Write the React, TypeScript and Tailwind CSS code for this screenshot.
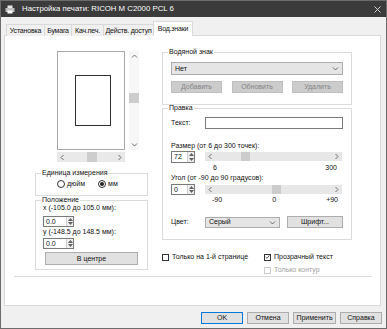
import type { ReactNode } from "react";

type Dir = "up" | "down" | "left" | "right";

function Chevron({ dir, color = "#606060" }: { dir: Dir; color?: string }) {
  const d = {
    up: "M1 4.5 L3.5 2 L6 4.5",
    down: "M1 2.5 L3.5 5 L6 2.5",
    left: "M4.5 1 L2 3.5 L4.5 6",
    right: "M2.5 1 L5 3.5 L2.5 6",
  }[dir];
  return (
    <svg width="7" height="7" viewBox="0 0 7 7" className="shrink-0">
      <path d={d} fill="none" stroke={color} strokeWidth="0.9" />
    </svg>
  );
}

function Group({ title, className, children }: { title: string; className: string; children: ReactNode }) {
  return (
    <fieldset className={"border border-[#dcdcdc] " + className}>
      <legend className="ml-[5px] px-[1px] leading-[8px]">{title}</legend>
      {children}
    </fieldset>
  );
}

function Spin({ value, w }: { value: string; w: string }) {
  return (
    <div className={"flex h-[11px] border border-[#7a7a7a] bg-white " + w}>
      <div className="flex-1 pl-[2px] leading-[9px]">{value}</div>
      <div className="flex w-[7px] flex-col border-l border-[#d0d0d0] bg-[#efefef]">
        <div className="flex flex-1 items-center justify-center">
          <svg width="5" height="3" viewBox="0 0 5 3"><path d="M0 3 L2.5 0 L5 3 Z" fill="#606060" /></svg>
        </div>
        <div className="flex flex-1 items-center justify-center">
          <svg width="5" height="3" viewBox="0 0 5 3"><path d="M0 0 L2.5 3 L5 0 Z" fill="#606060" /></svg>
        </div>
      </div>
    </div>
  );
}

function Slider({ thumb }: { thumb: string }) {
  return (
    <div className="mt-[1px] flex h-[9px] w-[137px] items-center bg-[#e7e7e7] px-[2px]">
      <Chevron dir="left" />
      <div className="flex h-full flex-1">
        <div className={"h-full w-[9px] bg-[#cccccc] " + thumb} />
      </div>
      <Chevron dir="right" />
    </div>
  );
}

function Btn({ label, w, disabled, primary }: { label: string; w: string; disabled?: boolean; primary?: boolean }) {
  return (
    <div
      className={
        "flex h-[12px] items-center justify-center border leading-[8px] " +
        w +
        (primary ? " border-[#0078d7] bg-[#e1e1e1]" : disabled ? " border-[#bfbfbf] bg-[#cccccc] text-[#838383]" : " border-[#adadad] bg-[#e1e1e1]")
      }
    >
      {label}
    </div>
  );
}

function Select({ value, w }: { value: string; w: string }) {
  return (
    <div className={"flex items-center justify-between border border-[#adadad] bg-[#e5e5e5] pl-[3px] pr-[3px] leading-[8px] " + w}>
      <span>{value}</span>
      <Chevron dir="down" />
    </div>
  );
}

function Check({ checked, disabled }: { checked?: boolean; disabled?: boolean }) {
  return (
    <div className={"flex h-[7px] w-[7px] shrink-0 items-center justify-center border bg-white " + (disabled ? "border-[#cccccc]" : "border-[#333333]")}>
      {checked && (
        <svg width="6" height="6" viewBox="0 0 6 6"><path d="M0.8 3 L2.4 4.6 L5.3 1" fill="none" stroke="#222" strokeWidth="0.9" /></svg>
      )}
    </div>
  );
}

function Radio({ checked }: { checked?: boolean }) {
  return (
    <div className="flex h-[8px] w-[8px] items-center justify-center rounded-full border border-[#333333] bg-white">
      {checked && <div className="h-[4px] w-[4px] rounded-full bg-[#222]" />}
    </div>
  );
}

const tabs = [
  { label: "Установка", w: "w-[39px]" },
  { label: "Бумага", w: "w-[28px]" },
  { label: "Кач.печ.", w: "w-[33px]" },
  { label: "Действ. доступ", w: "w-[51px]" },
];

export default function App() {
  return (
    <div className="flex h-[329px] w-[387px] flex-col border border-[#6c6c6c] bg-[#f0f0f0] font-['Liberation_Sans',Arial,sans-serif] text-[7px] leading-[8px] text-[#111]">
      {/* title bar */}
      <div className="flex h-[16px] shrink-0 items-center bg-[#3b3b3b] text-[7.8px] text-white">
        <svg width="10" height="9" viewBox="0 0 10 9" className="ml-[4px]">
          <rect x="2.5" y="0.5" width="5" height="2.5" fill="#e8e8e8" />
          <rect x="0.5" y="3" width="9" height="4" fill="#bdbdbd" />
          <rect x="2.5" y="5.5" width="5" height="3" fill="#ffffff" />
        </svg>
        <span className="ml-[7px]">Настройка печати: RICOH M C2000 PCL 6</span>
        <svg width="7" height="7" viewBox="0 0 7 7" className="ml-auto mr-[5px]">
          <path d="M0.5 0.5 L6.5 6.5 M6.5 0.5 L0.5 6.5" stroke="#e0e0e0" strokeWidth="0.9" />
        </svg>
      </div>

      {/* tabs */}
      <div className="relative z-10 ml-[5px] mt-[4px] -mb-px flex h-[15px] items-end tracking-[-0.2px]">
        {tabs.map((t) => (
          <div key={t.label} className={"-mr-px flex h-[12px] items-center justify-center whitespace-nowrap border border-b-0 border-[#d9d9d9] bg-[#f0f0f0] " + t.w}>
            {t.label}
          </div>
        ))}
        <div className="flex h-[15px] w-[40px] items-center justify-center border border-b-0 border-[#d9d9d9] bg-white pb-[1px]">
          Вод.знаки
        </div>
      </div>

      {/* panel */}
      <div className="ml-[3px] flex h-[271px] w-[377px] shrink-0 flex-col border border-[#d9d9d9] bg-white">
        <div className="flex h-[240px]">
          {/* left column */}
          <div className="ml-[30px] flex w-[113px] flex-col">
            <div className="ml-[22px] mt-[15px] flex">
              <div className="h-[99px] w-[68px] border border-[#a8a8a8] bg-white pl-[17px] pt-[23px]">
                <div className="h-[51px] w-[36px] border border-[#303030]" />
              </div>
              <div className="ml-[4px] flex h-[99px] w-[10px] flex-col items-center bg-[#f7f7f7]">
                <div className="mt-[2px]"><Chevron dir="up" /></div>
                <div className="mt-[33px] h-[10px] w-full bg-[#cdcdcd]" />
                <div className="flex-1" />
                <div className="mb-[2px]"><Chevron dir="down" /></div>
              </div>
            </div>
            <div className="ml-[22px] mt-[2px] flex h-[10px] w-[68px] items-center bg-[#e9e9e9] px-[2px]">
              <Chevron dir="left" />
              <div className="ml-[21px] h-full w-[10px] bg-[#cdcdcd]" />
              <div className="flex-1" />
              <Chevron dir="right" />
            </div>

            <Group title="Единица измерения" className="mt-[7px] h-[27px]">
              <div className="mt-[3px] flex items-center pl-[21px]">
                <Radio />
                <span className="ml-[2px]">дюйм</span>
                <div className="ml-[13px]"><Radio checked /></div>
                <span className="ml-[2px]">мм</span>
              </div>
            </Group>

            <Group title="Положение" className="h-[74px]">
              <div className="flex flex-col pl-[7px]">
                <div>x (-105.0 до 105.0 мм):</div>
                <div className="mt-[4px]"><Spin value="0.0" w="w-[31px]" /></div>
                <div className="mt-[1px]">y (-148.5 до 148.5 мм):</div>
                <div className="mt-[2px]"><Spin value="0.0" w="w-[31px]" /></div>
                <div className="ml-[2px] mt-[3px]"><Btn label="В центре" w="w-[93px] h-[13px]" /></div>
              </div>
            </Group>
          </div>

          {/* right column */}
          <div className="ml-[14px] flex w-[190px] flex-col">
            <Group title="Водяной знак" className="mt-[12px] h-[57px]">
              <div className="flex flex-col px-[8px]">
                <Select value="Нет" w="mt-[6px] h-[13px]" />
                <div className="mt-[6px] flex justify-between">
                  <Btn label="Добавить" w="w-[51px]" disabled />
                  <Btn label="Обновить" w="w-[51px]" disabled />
                  <Btn label="Удалить" w="w-[51px]" disabled />
                </div>
              </div>
            </Group>

            <Group title="Правка" className="-mt-px h-[136px]">
              <div className="flex flex-col px-[8px]">
                <div className="mt-[5px] flex items-center">
                  <span className="w-[34px]">Текст:</span>
                  <div className="h-[12px] w-[138px] border border-[#7a7a7a] bg-white" />
                </div>
                <div className="mt-[13px]">Размер (от 6 до 300 точек):</div>
                <div className="mt-[1px] flex items-start">
                  <Spin value="72" w="w-[24px] h-[12px]" />
                  <div className="ml-[10px]"><Slider thumb="ml-[27px]" /></div>
                </div>
                <div className="mt-[1px] flex w-[172px] justify-between pl-[42px] pr-[6px]">
                  <span>6</span>
                  <span>300</span>
                </div>
                <div className="mt-[2px]">Угол (от -90 до 90 градусов):</div>
                <div className="mt-[2px] flex items-start">
                  <Spin value="0" w="w-[24px]" />
                  <div className="ml-[10px]"><Slider thumb="ml-[58px]" /></div>
                </div>
                <div className="mt-[1px] flex w-[172px] justify-between pl-[41px] pr-[5px]">
                  <span>-90</span>
                  <span>0</span>
                  <span>+90</span>
                </div>
                <div className="mt-[12px] flex items-center">
                  <span className="w-[34px]">Цвет:</span>
                  <Select value="Серый" w="h-[11px] w-[75px]" />
                  <div className="ml-[7px]"><Btn label="Шрифт..." w="w-[56px] h-[12px]" /></div>
                </div>
              </div>
            </Group>

            <div className="mt-[13px] grid grid-cols-[102px_1fr] gap-y-[5px]">
              <div className="flex items-center">
                <Check />
                <span className="ml-[3px]">Только на 1-й странице</span>
              </div>
              <div className="flex items-center">
                <Check checked />
                <span className="ml-[3px]">Прозрачный текст</span>
              </div>
              <div />
              <div className="flex items-center text-[#a0a0a0]">
                <Check disabled />
                <span className="ml-[3px]">Только контур</span>
              </div>
            </div>
          </div>
        </div>
        <div className="ml-[9px] h-px w-[358px] bg-[#dcdcdc]" />
      </div>

      {/* bottom buttons */}
      <div className="mr-[4px] mt-[6px] flex justify-end gap-[4px]">
        <Btn label="OK" w="w-[42px]" primary />
        <Btn label="Отмена" w="w-[42px]" />
        <Btn label="Применить" w="w-[43px]" />
        <Btn label="Справка" w="w-[42px]" />
      </div>
    </div>
  );
}
